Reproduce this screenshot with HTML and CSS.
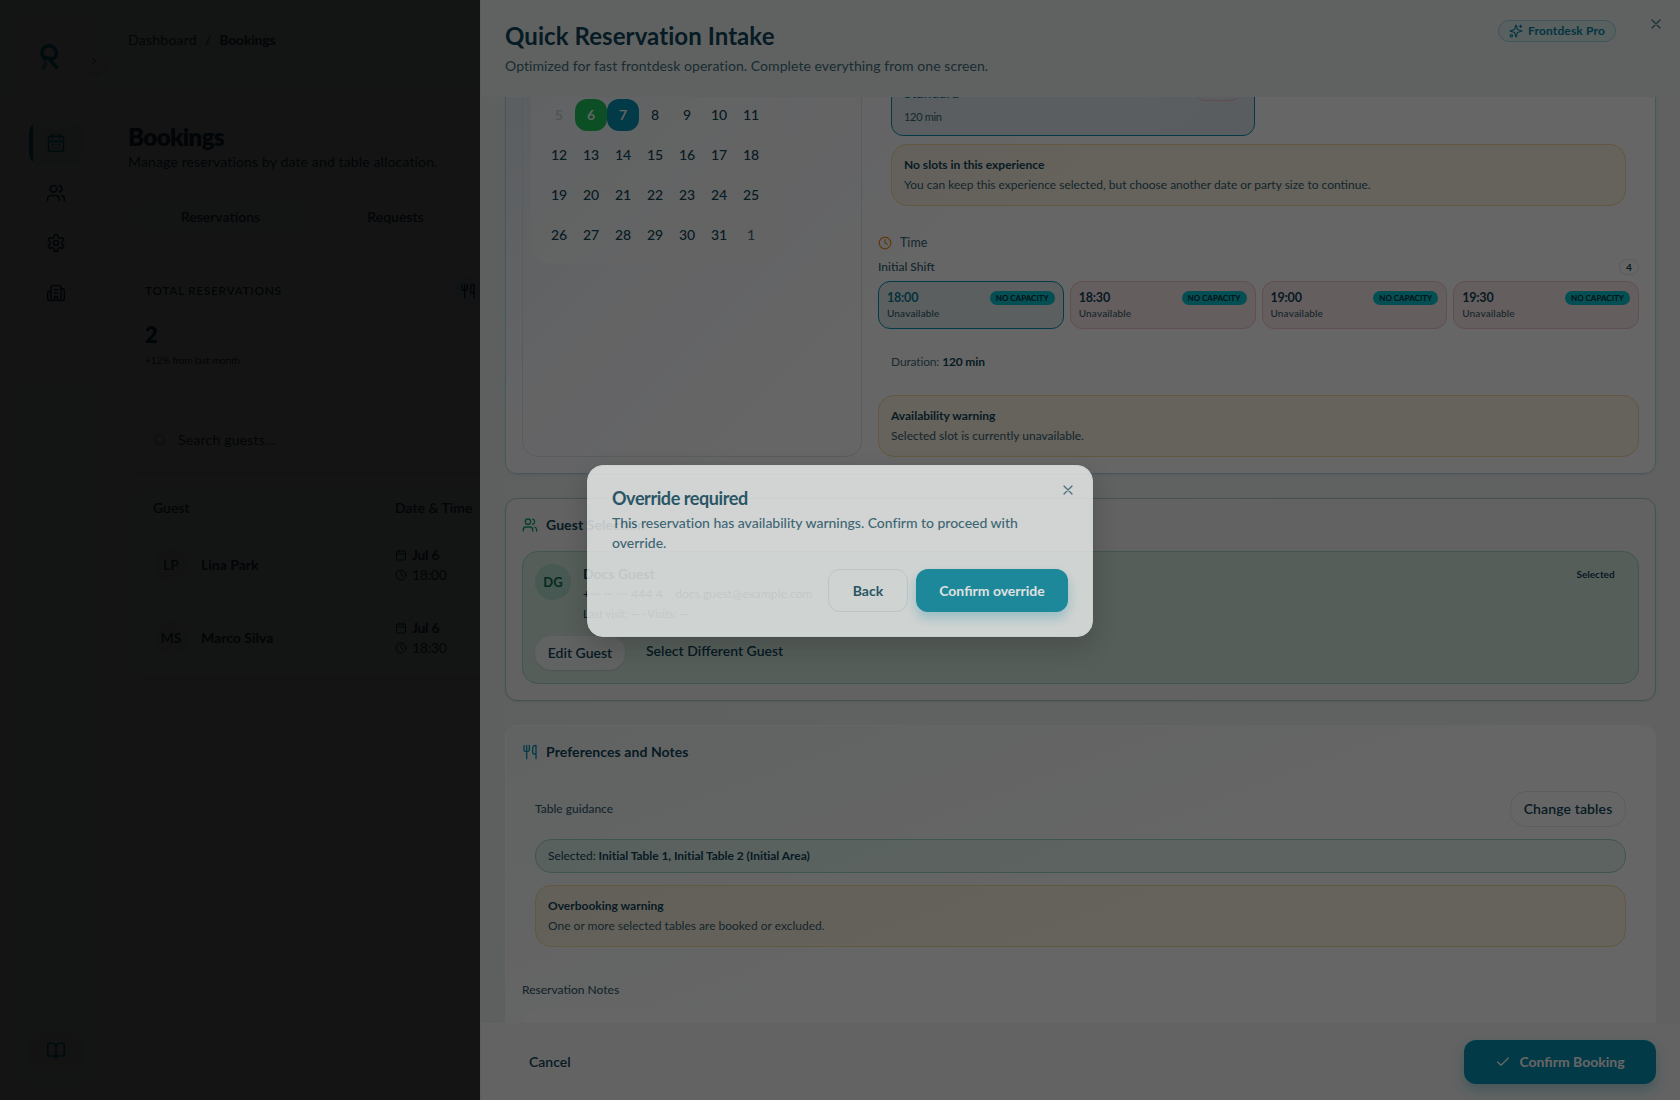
FILE: index.html
```html
<!DOCTYPE html>
<html lang="en">
    <head>
        <meta charset="UTF-8" />
        <meta name="viewport" content="width=device-width, initial-scale=1.0" />
        <title>Bookings</title>
        <link rel="stylesheet" href="styles.css">
    </head>
    <body>
        <div class="page">
            <aside class="sidebar">
                <div class="sidebar-top">
                    <div class="logo">
                        <svg width="20" height="26" viewBox="0 0 20 26" fill="none" stroke="currentColor" stroke-width="3.4">
                            <path d="M6.5 15.6A7.2 7.2 0 1 1 13 15L8.5 14.2L17.500 24.500" />
                            <path d="M5 17L2.500 24.500H4.500L7 18" stroke-width="1" />
                        </svg>
                    </div>
                    <button class="sidebar-toggle">
                        <svg class="icon" width="12" height="12" viewBox="0 0 24 24"><path d="m9 18 6-6-6-6" /></svg>
                    </button>
                </div>
                <nav class="sidebar-nav">
                    <a class="nav-item active">
                        <svg class="icon" width="20" height="20" viewBox="0 0 24 24"><path d="M8 2v4M16 2v4M3 10h18M8 14h.01M12 14h.01M16 14h.01M8 18h.01M12 18h.01M16 18h.01" /><rect x="3" y="4" width="18" height="18" rx="2" /></svg>
                    </a>
                    <a class="nav-item">
                        <svg class="icon" width="20" height="20" viewBox="0 0 24 24"><path d="M16 21v-2a4 4 0 0 0-4-4H6a4 4 0 0 0-4 4v2M22 21v-2a4 4 0 0 0-3-3.870M16 3.130a4 4 0 0 1 0 7.750" /><circle cx="9" cy="7" r="4" /></svg>
                    </a>
                    <a class="nav-item">
                        <svg class="icon" width="20" height="20" viewBox="0 0 24 24"><path d="M12.220 2h-.440a2 2 0 0 0-2 2v.180a2 2 0 0 1-1 1.730l-.430.250a2 2 0 0 1-2 0l-.150-.080a2 2 0 0 0-2.730.730l-.220.380a2 2 0 0 0 .730 2.730l.150.100a2 2 0 0 1 1 1.720v.510a2 2 0 0 1-1 1.740l-.150.090a2 2 0 0 0-.730 2.730l.220.380a2 2 0 0 0 2.730.730l.150-.080a2 2 0 0 1 2 0l.430.250a2 2 0 0 1 1 1.730V20a2 2 0 0 0 2 2h.440a2 2 0 0 0 2-2v-.180a2 2 0 0 1 1-1.730l.430-.250a2 2 0 0 1 2 0l.150.080a2 2 0 0 0 2.730-.730l.220-.390a2 2 0 0 0-.730-2.730l-.150-.080a2 2 0 0 1-1-1.740v-.500a2 2 0 0 1 1-1.740l.150-.090a2 2 0 0 0 .730-2.730l-.220-.380a2 2 0 0 0-2.730-.730l-.150.080a2 2 0 0 1-2 0l-.430-.250a2 2 0 0 1-1-1.730V4a2 2 0 0 0-2-2z" /><circle cx="12" cy="12" r="3" /></svg>
                    </a>
                    <a class="nav-item">
                        <svg class="icon" width="20" height="20" viewBox="0 0 24 24"><path d="M10 12h4M10 8h4M14 21v-3a2 2 0 0 0-4 0v3M6 10H4a2 2 0 0 0-2 2v7a2 2 0 0 0 2 2h16a2 2 0 0 0 2-2V9a2 2 0 0 0-2-2h-2" /><path d="M6 21V5a2 2 0 0 1 2-2h8a2 2 0 0 1 2 2v16" /></svg>
                    </a>
                </nav>
                <a class="nav-item docs">
                    <svg class="icon" width="20" height="20" viewBox="0 0 24 24"><path d="M12 7v14M3 18a1 1 0 0 1-1-1V4a1 1 0 0 1 1-1h5a4 4 0 0 1 4 4 4 4 0 0 1 4-4h5a1 1 0 0 1 1 1v13a1 1 0 0 1-1 1h-6a3 3 0 0 0-3 3 3 3 0 0 0-3-3z" /></svg>
                </a>
            </aside>

            <main class="main">
                <div class="breadcrumb"><span class="crumb">Dashboard</span><span>/</span><b>Bookings</b></div>
                <h1>Bookings</h1>
                <p class="subtitle">Manage reservations by date and table allocation.</p>
                <div class="tabs">
                    <div class="tab on">Reservations</div>
                    <div class="tab">Requests</div>
                </div>
                <div class="stat-card">
                    <div class="stat-head">
                        <span class="stat-label">TOTAL RESERVATIONS</span>
                        <span class="stat-icon">
                            <svg class="icon" width="16" height="16" viewBox="0 0 24 24"><path d="M3 2v7c0 1.100.900 2 2 2h4a2 2 0 0 0 2-2V2M7 2v20M21 15V2a5 5 0 0 0-5 5v6c0 1.100.900 2 2 2h3Zm0 0v7" /></svg>
                        </span>
                    </div>
                    <div class="stat-value">2</div>
                    <div class="stat-note">+12% from last month</div>
                </div>
                <div class="search-card">
                    <div class="search">
                        <svg class="icon" width="14" height="14" viewBox="0 0 24 24"><circle cx="11" cy="11" r="8" /><path d="m21 21-4.300-4.300" /></svg>
                        <span>Search guests...</span>
                    </div>
                </div>
                <div class="table-card">
                    <div class="table-row table-head"><span>Guest</span><span>Date &amp; Time</span></div>
                    <div class="table-row">
                        <div class="guest"><span class="initials">LP</span><b>Lina Park</b></div>
                        <div class="when">
                            <div><svg class="icon" width="12" height="12" viewBox="0 0 24 24"><path d="M8 2v4M16 2v4M3 10h18" /><rect x="3" y="4" width="18" height="18" rx="2" /></svg><b>Jul 6</b></div>
                            <div><svg class="icon" width="12" height="12" viewBox="0 0 24 24"><circle cx="12" cy="12" r="10" /><path d="M12 6v6l4 2" /></svg><span>18:00</span></div>
                        </div>
                    </div>
                    <div class="table-row">
                        <div class="guest"><span class="initials">MS</span><b>Marco Silva</b></div>
                        <div class="when">
                            <div><svg class="icon" width="12" height="12" viewBox="0 0 24 24"><path d="M8 2v4M16 2v4M3 10h18" /><rect x="3" y="4" width="18" height="18" rx="2" /></svg><b>Jul 6</b></div>
                            <div><svg class="icon" width="12" height="12" viewBox="0 0 24 24"><circle cx="12" cy="12" r="10" /><path d="M12 6v6l4 2" /></svg><span>18:30</span></div>
                        </div>
                    </div>
                </div>
            </main>
        </div>

        <div class="drawer-overlay"></div>

        <section class="drawer">
            <header class="drawer-header">
                <div>
                    <h2>Quick Reservation Intake</h2>
                    <p class="drawer-text">Optimized for fast frontdesk operation. Complete everything from one screen.</p>
                </div>
                <span class="pro-badge">
                    <svg class="icon" width="14" height="14" viewBox="0 0 24 24"><path d="M9.940 15.500A2 2 0 0 0 8.500 14.060l-6.140-1.580a.500.500 0 0 1 0-.960L8.500 9.940A2 2 0 0 0 9.940 8.500l1.580-6.140a.500.500 0 0 1 .960 0L14.060 8.500A2 2 0 0 0 15.500 9.940l6.140 1.580a.500.500 0 0 1 0 .960L15.500 14.060a2 2 0 0 0-1.440 1.440l-1.580 6.140a.500.500 0 0 1-.960 0zM20 2v4M22 4h-4" /><circle cx="4" cy="20" r="2" /></svg>
                    Frontdesk Pro
                </span>
                <svg class="icon close" width="16" height="16" viewBox="0 0 24 24"><path d="M18 6 6 18M6 6l12 12" /></svg>
            </header>

            <div class="drawer-body">
                <div class="card card-slot">
                    <div class="date-panel">
                        <div class="calendar">
                            <span class="muted">5</span><span class="today">6</span><span class="selected">7</span><span>8</span><span>9</span><span>10</span><span>11</span>
                            <span>12</span><span>13</span><span>14</span><span>15</span><span>16</span><span>17</span><span>18</span>
                            <span>19</span><span>20</span><span>21</span><span>22</span><span>23</span><span>24</span><span>25</span>
                            <span>26</span><span>27</span><span>28</span><span>29</span><span>30</span><span>31</span><span class="next">1</span>
                        </div>
                    </div>
                    <div class="slot-panel">
                        <div class="experiences">
                            <div class="experience">
                                <div class="experience-name">Standard<i class="pink-pill"></i></div>
                                <div class="experience-time">120 min</div>
                            </div>
                            <div class="notice warning">
                                <b>No slots in this experience</b>
                                <span>You can keep this experience selected, but choose another date or party size to continue.</span>
                            </div>
                        </div>
                        <div class="time-title">
                            <svg class="icon" width="14" height="14" viewBox="0 0 24 24"><circle cx="12" cy="12" r="10" /><path d="M12 6v6l4 2" /></svg>
                            <span>Time</span>
                        </div>
                        <div class="shift"><span>Initial Shift</span><b class="count">4</b></div>
                        <div class="slots">
                            <div class="slot chosen"><div class="slot-top"><b>18:00</b><em>NO CAPACITY</em></div><span>Unavailable</span></div>
                            <div class="slot"><div class="slot-top"><b>18:30</b><em>NO CAPACITY</em></div><span>Unavailable</span></div>
                            <div class="slot"><div class="slot-top"><b>19:00</b><em>NO CAPACITY</em></div><span>Unavailable</span></div>
                            <div class="slot"><div class="slot-top"><b>19:30</b><em>NO CAPACITY</em></div><span>Unavailable</span></div>
                        </div>
                        <div class="duration">Duration: <b>120 min</b></div>
                        <div class="notice warning">
                            <b>Availability warning</b>
                            <span>Selected slot is currently unavailable.</span>
                        </div>
                    </div>
                </div>

                <div class="card card-guest">
                    <div class="card-title green">
                        <svg class="icon" width="16" height="16" viewBox="0 0 24 24"><path d="M16 21v-2a4 4 0 0 0-4-4H6a4 4 0 0 0-4 4v2M22 21v-2a4 4 0 0 0-3-3.870M16 3.130a4 4 0 0 1 0 7.750" /><circle cx="9" cy="7" r="4" /></svg>
                        Guest Selection
                    </div>
                    <div class="guest-box">
                        <div class="guest-row">
                            <span class="avatar">DG</span>
                            <div class="guest-info">
                                <b>Docs Guest</b>
                                <div class="guest-contact"><span class="phone">+··· ··· ··· 444 4</span><span class="email">docs.guest@example.com</span></div>
                                <div class="guest-visits">Last visit: — · Visits: —</div>
                            </div>
                            <span class="selected-badge">Selected</span>
                        </div>
                        <div class="guest-actions">
                            <button class="edit-guest">Edit Guest</button>
                            <button class="other-guest">Select Different Guest</button>
                        </div>
                    </div>
                </div>

                <div class="card card-notes">
                    <div class="card-title teal">
                        <svg class="icon" width="16" height="16" viewBox="0 0 24 24"><path d="M3 2v7c0 1.100.900 2 2 2h4a2 2 0 0 0 2-2V2M7 2v20M21 15V2a5 5 0 0 0-5 5v6c0 1.100.900 2 2 2h3Zm0 0v7" /></svg>
                        Preferences and Notes
                    </div>
                    <div class="tables-box">
                        <div class="tables-head"><span class="label">Table guidance</span><button class="change-tables">Change tables</button></div>
                        <div class="notice success"><span>Selected: <b>Initial Table 1, Initial Table 2 (Initial Area)</b></span></div>
                        <div class="notice warning">
                            <b>Overbooking warning</b>
                            <span>One or more selected tables are booked or excluded.</span>
                        </div>
                    </div>
                    <span class="label notes-label">Reservation Notes</span>
                    <div class="notes-input">Allergies, celebration</div>
                </div>
            </div>

            <footer class="drawer-footer">
                <button class="cancel">Cancel</button>
                <button class="primary">
                    <svg class="icon" width="16" height="16" viewBox="0 0 24 24"><path d="M20 6 9 17l-5-5" /></svg>
                    Confirm Booking
                </button>
            </footer>
        </section>

        <div class="dialog-overlay">
            <div class="dialog">
                <svg class="icon close" width="16" height="16" viewBox="0 0 24 24"><path d="M18 6 6 18M6 6l12 12" /></svg>
                <h3>Override required</h3>
                <p>This reservation has availability warnings. Confirm to proceed with override.</p>
                <div class="dialog-actions">
                    <button class="back">Back</button>
                    <button class="primary">Confirm override</button>
                </div>
            </div>
        </div>
    </body>
</html>
```
FILE: styles.css
```css
* {
    box-sizing: border-box;
}

body {
    margin: 0;
    width: 1680px;
    height: 1100px;
    overflow: hidden;
    font-family: Lato, "Open Sans", sans-serif;
    font-size: 14px;
    line-height: 20px;
    color: #114558;
    background: #fff;
}

h1, h2, h3, p {
    margin: 0;
}

b {
    font-weight: 700;
}

button {
    font: inherit;
    color: inherit;
    border: none;
    background: none;
    padding: 0;
}

.icon {
    fill: none;
    stroke: currentColor;
    stroke-width: 2;
    stroke-linecap: round;
    stroke-linejoin: round;
    flex: none;
}

/* bookings page */
.page {
    display: flex;
    height: 1100px;
    padding: 17px 0 16px 17px;
    background: linear-gradient(#f0faf6, #fff 380px);
}

.sidebar {
    display: flex;
    flex-direction: column;
    width: 78px;
    height: 1067px;
    border-radius: 16px;
    background: linear-gradient(#fff, #fff 200px, #f0faf7 420px);
    box-shadow: 0 4px 12px rgba(0, 0, 0, 0.08);
}

.sidebar-top {
    display: flex;
    align-items: center;
    height: 80px;
    padding: 1px 0 0 12px;
    border-bottom: 1px solid #eef2f2;
}

.logo {
    display: flex;
    align-items: center;
    justify-content: center;
    flex: none;
    width: 41px;
    height: 38px;
    border-radius: 12px;
    background: #e9f5f3;
    color: #0891b2;
}

.sidebar-toggle {
    display: flex;
    align-items: center;
    justify-content: center;
    flex: none;
    width: 24px;
    height: 24px;
    margin: 8px 0 0 12px;
    border-radius: 50%;
    background: #fff;
    box-shadow: 0 1px 4px rgba(0, 0, 0, 0.2);
}

.sidebar-nav {
    display: flex;
    flex-direction: column;
    gap: 6px;
    flex: 1;
    padding: 24px 12px;
}

.nav-item {
    display: flex;
    align-items: center;
    justify-content: center;
    height: 44px;
    border-radius: 12px;
}

.nav-item.active {
    background: linear-gradient(90deg, #0891b2 4px, #e6f6f4 4px);
    color: #0891b2;
}

.nav-item.docs {
    height: 40px;
    margin: 0 12px 13px;
    background: #e8eeec;
    color: #0891b2;
}

.main {
    width: 900px;
    padding: 13px 0 0 33px;
    flex: none;
}

.breadcrumb {
    display: flex;
    gap: 8px;
}

.crumb {
    letter-spacing: 0.25px;
}

.breadcrumb b {
    letter-spacing: -0.2px;
}

h1 {
    margin-top: 71px;
    font-size: 24px;
    line-height: 32px;
    font-weight: 800;
    letter-spacing: -0.6px;
}

.subtitle {
    margin-top: -1px;
    letter-spacing: 0.14px;
}

.tabs {
    display: flex;
    width: 355px;
    margin-top: 29px;
    padding-left: 5px;
}

.tab {
    display: flex;
    justify-content: center;
    flex: 1;
    padding: 6px 0;
    border-radius: 16px;
    font-weight: 600;
}

.tab.on {
    background: #f3faf8;
}

.stat-card {
    height: 118px;
    margin-top: 34px;
    padding: 10px 17px;
    border-radius: 12px;
    background: #fff;
    box-shadow: 0 4px 10px rgba(0, 0, 0, 0.08);
}

.stat-head {
    display: flex;
    align-items: center;
    width: 337px;
    justify-content: space-between;
}

.stat-label {
    font-size: 12px;
    font-weight: 600;
    letter-spacing: 0.6px;
}

.stat-icon {
    display: flex;
    padding: 6px;
    border-radius: 50%;
    background: #d5f0f5;
}

.stat-value {
    margin-top: 14px;
    font-size: 22px;
    line-height: 32px;
    font-weight: 800;
}

.stat-note {
    margin-top: -1px;
    font-size: 10px;
    letter-spacing: -0.15px;
}

.search-card {
    height: 61px;
    margin-top: 25px;
    padding: 12px;
    border-radius: 12px;
    background: #fff;
    box-shadow: 0 4px 8px rgba(0, 0, 0, 0.12);
}

.search {
    display: flex;
    align-items: center;
    gap: 11px;
    width: 280px;
    height: 36px;
    padding: 0 13px;
    border-radius: 18px;
    background: #fbfdfd;
    letter-spacing: 0.2px;
}

.search .icon {
    opacity: 0.5;
}

.table-card {
    margin-top: 20px;
    height: 184px;
    border-radius: 12px;
    background: #f0faf6;
    box-shadow: 0 4px 8px rgba(0, 0, 0, 0.12);
}

.table-row {
    display: grid;
    grid-template-columns: 242px 1fr;
    align-items: center;
    height: 73px;
    padding-left: 25px;
}

.table-head {
    height: 37px;
    padding-bottom: 3px;
    font-weight: 600;
}

.guest {
    display: flex;
    align-items: center;
    gap: 13px;
    padding-left: 1px;
}

.initials {
    width: 34px;
    height: 34px;
    line-height: 34px;
    border-radius: 50%;
    background: #e8f2f0;
    text-align: center;
    font-weight: 600;
}

.when div {
    display: flex;
    align-items: center;
    gap: 5px;
    letter-spacing: -0.3px;
}

.drawer-overlay {
    position: fixed;
    inset: 0;
    background: rgba(0, 0, 0, 0.8);
}

/* reservation drawer */
.drawer {
    position: fixed;
    top: 0;
    right: 0;
    display: flex;
    flex-direction: column;
    width: 1200px;
    height: 1100px;
    border-left: 1px solid #e4eeea;
    background: linear-gradient(90deg, #e8f1ed, #f0f5f3 40%, #eff3f1);
}

.drawer-header {
    display: flex;
    align-items: flex-start;
    height: 97px;
    padding: 20px 16px 0 24px;
    background: #f0f5f3;
}

.drawer-header div {
    flex: 1;
}

h2 {
    font-size: 24px;
    line-height: 32px;
    letter-spacing: 0.07px;
}

.drawer-text {
    margin-top: 4px;
    color: #436e7d;
    letter-spacing: 0.07px;
}

.pro-badge {
    display: flex;
    align-items: center;
    gap: 5px;
    height: 22px;
    width: 118px;
    padding-left: 10px;
    border: 1px solid #9fd3dc;
    border-radius: 11px;
    background: #dceff1;
    color: #0884a2;
    font-size: 12px;
    font-weight: 700;
    letter-spacing: 0.15px;
}

.drawer-header .close {
    margin: -4px 0 0 32px;
    color: #4b7685;
}

.drawer-body {
    display: flex;
    flex-direction: column;
    gap: 24px;
    height: 926px;
    padding: 0 24px;
    overflow: hidden;
}

.card {
    flex: none;
    padding: 16px;
    border: 1px solid #b4d5d3;
    border-radius: 12px;
    background: #fff;
    box-shadow: 0 1px 2px rgba(0, 0, 0, 0.08);
}

.card-slot {
    display: flex;
    gap: 16px;
    height: 441px;
    margin-top: -64px;
    border-color: #b5dbe2;
    background: linear-gradient(135deg, #dfeaf1, #f8f9fd 22%, #fff 45%);
}

.date-panel {
    width: 340px;
    padding: 0 8px;
    border: 1px solid #dde5e8;
    border-radius: 16px;
}

.calendar {
    display: grid;
    grid-template-columns: repeat(7, 32px);
    row-gap: 8px;
    width: 248px;
    margin-top: -4px;
    padding: 52px 12px 12px;
    border-radius: 16px;
    background: rgba(250, 252, 252, 0.6);
}

.calendar span {
    height: 32px;
    line-height: 32px;
    border-radius: 12px;
    text-align: center;
    font-weight: 500;
}

.calendar .muted {
    color: #c3cccf;
}

.calendar .next {
    color: #436e7d;
}

.calendar .today {
    background: #22c55e;
    color: #fff;
    font-weight: 600;
}

.calendar .selected {
    background: #0891b2;
    color: #fff;
    font-weight: 600;
}

.slot-panel {
    flex: 1;
    display: flex;
    flex-direction: column;
}

.experiences {
    display: flex;
    flex-direction: column;
    gap: 8px;
    padding: 13px;
}

.experience {
    width: 364px;
    height: 73px;
    padding: 19px 13px 0 12px;
    border: 1px solid #0891b2;
    border-radius: 12px;
    background: linear-gradient(135deg, #e2ecf1, #dfe9f1);
}

.experience-name {
    display: flex;
    justify-content: space-between;
    align-items: flex-start;
    height: 20px;
    color: #0b7a95;
    font-weight: 600;
}

.pink-pill {
    width: 46px;
    height: 20px;
    margin-top: -2px;
    border: 1px solid #f5bcc5;
    border-radius: 10px;
}

.experience-time {
    margin-top: 6px;
    font-size: 11px;
    line-height: 16px;
    letter-spacing: -0.3px;
    color: #34606f;
}

.notice {
    display: flex;
    flex-direction: column;
    gap: 4px;
    padding: 12px;
    border: 1px solid;
    border-radius: 16px;
    font-size: 12px;
    line-height: 16px;
}

.notice.warning {
    border-color: #f5d9a0;
    background: rgba(245, 158, 11, 0.1);
}

.notice.warning span {
    color: #34606f;
}

.notice.success {
    padding: 8px 12px;
    border-color: #9fd8c3;
    background: rgba(16, 185, 129, 0.1);
    letter-spacing: -0.05px;
}

.time-title {
    display: flex;
    align-items: center;
    gap: 8px;
    margin-top: 14px;
    font-size: 12.5px;
    font-weight: 500;
    color: #436e7d;
}

.time-title .icon {
    color: #f08a1d;
}

.shift {
    display: flex;
    justify-content: space-between;
    align-items: center;
    height: 16px;
    margin: 6px 0;
    font-size: 12px;
    font-weight: 500;
    color: #34606f;
}

.count {
    width: 20px;
    height: 16px;
    line-height: 14px;
    border: 1px solid #dde5e8;
    border-radius: 8px;
    text-align: center;
    font-size: 10px;
    color: #114558;
}

.slots {
    display: grid;
    grid-template-columns: repeat(4, 1fr);
    gap: 6px;
}

.slot {
    height: 48px;
    padding: 7px 8px;
    border: 1px solid #f0c3cb;
    border-radius: 12px;
    background: #fdeaec;
    font-size: 10px;
    line-height: 12px;
}

.slot > span {
    display: block;
    color: #34606f;
    font-weight: 500;
    letter-spacing: 0.15px;
}

.slot.chosen {
    border-color: #0891b2;
    background: #e3eef1;
}

.slot.chosen b {
    color: #0b7a95;
}

.slot-top {
    display: flex;
    justify-content: space-between;
    align-items: center;
    height: 18px;
    font-size: 12.5px;
    letter-spacing: -0.2px;
}

.slot-top em {
    width: 65px;
    height: 14px;
    line-height: 14px;
    border-radius: 7px;
    background: #0cc5cf;
    color: #042f3a;
    text-align: center;
    font-style: normal;
    font-weight: 700;
    font-size: 8px;
    letter-spacing: 0;
}

.duration {
    margin: 16px 0;
    padding: 9px 13px;
    font-size: 12px;
    line-height: 16px;
    letter-spacing: -0.15px;
    color: #436e7d;
}

.duration b {
    color: #114558;
}

.card-title {
    display: flex;
    align-items: center;
    gap: 8px;
    margin-bottom: 16px;
    font-weight: 700;
    letter-spacing: 0.08px;
}

.card-title.green .icon {
    color: #10a070;
}

.card-title.teal .icon {
    color: #0891b2;
}

.card-guest {
    border-color: #a9cfc2;
    background: #f2f4f3;
}

.guest-box {
    height: 133px;
    padding: 12px;
    border: 1px solid #a3d3c2;
    border-radius: 16px;
    background: #d7eae2;
}

.guest-row {
    display: flex;
    align-items: flex-start;
    gap: 12px;
}

.avatar {
    width: 36px;
    height: 36px;
    line-height: 36px;
    border-radius: 50%;
    background: #b5dccd;
    color: #0b6a4b;
    text-align: center;
    font-size: 13px;
    font-weight: 700;
}

.guest-info {
    flex: 1;
}

.guest-info b {
    display: block;
}

.guest-contact {
    display: flex;
    gap: 12px;
    margin-top: 2px;
    font-size: 12px;
    line-height: 16px;
}

.phone {
    letter-spacing: 0.28px;
}

.email {
    letter-spacing: 0.1px;
}

.guest-visits {
    margin-top: 4px;
    font-size: 11px;
    line-height: 16px;
}

.selected-badge {
    width: 61px;
    line-height: 19px;
    border: 1px solid #dbe9e4;
    border-radius: 11px;
    text-align: center;
    font-size: 10px;
    font-weight: 700;
}

.guest-actions {
    display: flex;
    gap: 21px;
    margin-top: 14px;
    font-weight: 600;
}

.edit-guest {
    width: 90px;
    height: 34px;
    border-radius: 16px;
    background: #f2f5f4;
    box-shadow: 0 1px 2px rgba(0, 0, 0, 0.12);
}

.other-guest {
    height: 30px;
}

.card-notes {
    height: 400px;
    border-color: #fafcfc;
    background: linear-gradient(160deg, #f2f6f5, #fff 50%);
    box-shadow: none;
}

.tables-box {
    display: flex;
    flex-direction: column;
    gap: 12px;
    padding: 13px;
}

.tables-head {
    display: flex;
    align-items: center;
    justify-content: space-between;
}

.label {
    font-size: 12px;
    line-height: 16px;
    font-weight: 500;
    color: #34606f;
}

.change-tables {
    width: 116px;
    height: 36px;
    border: 1px solid #e3ebeb;
    border-radius: 16px;
    font-weight: 600;
    letter-spacing: 0.12px;
}

.notes-label {
    display: block;
    margin-top: 22px;
}

.notes-input {
    height: 80px;
    margin-top: 10px;
    padding: 9px 12px;
    border: 1px solid #fafcfc;
    border-radius: 16px;
    background: #fff;
    color: #b5c6cc;
}

.drawer-footer {
    display: flex;
    justify-content: space-between;
    height: 77px;
    padding: 17px 24px 16px;
    background: #f4f8f6;
}

.cancel {
    padding: 0 24px;
    font-weight: 600;
}

.primary {
    display: flex;
    align-items: center;
    justify-content: center;
    gap: 8px;
    height: 44px;
    border-radius: 12px;
    background: #0891b2;
    color: #fff;
    font-weight: 700;
    box-shadow: 0 6px 12px rgba(8, 145, 178, 0.3);
}

.drawer-footer .primary {
    width: 192px;
}

/* override dialog */
.dialog-overlay {
    position: fixed;
    inset: 0;
    display: flex;
    align-items: center;
    justify-content: center;
    background: rgba(0, 0, 0, 0.6);
}

.dialog {
    position: relative;
    width: 506px;
    height: 172px;
    margin-top: 2px;
    padding: 23px 24px;
    border: 1px solid #e3ebeb;
    border-radius: 16px;
    background: #ecefee;
    color: #1c5468;
    opacity: 0.81;
    box-shadow: 0 10px 25px rgba(0, 0, 0, 0.2);
}

.dialog .close {
    position: absolute;
    top: 16px;
    right: 16px;
    color: #4b7685;
}

.dialog h3 {
    font-size: 18px;
    line-height: 18px;
    letter-spacing: -0.42px;
}

.dialog p {
    margin-top: 6px;
    color: #376878;
    font-weight: 500;
    letter-spacing: -0.02px;
}

.dialog-actions {
    display: flex;
    justify-content: flex-end;
    gap: 8px;
    margin-top: 16px;
    font-weight: 700;
}

.back {
    width: 80px;
    height: 43px;
    border: 1px solid #d5dcdc;
    border-radius: 12px;
    font-weight: 700;
}

.dialog .primary {
    width: 152px;
    height: 43px;
    background: #1092a9;
}
```
